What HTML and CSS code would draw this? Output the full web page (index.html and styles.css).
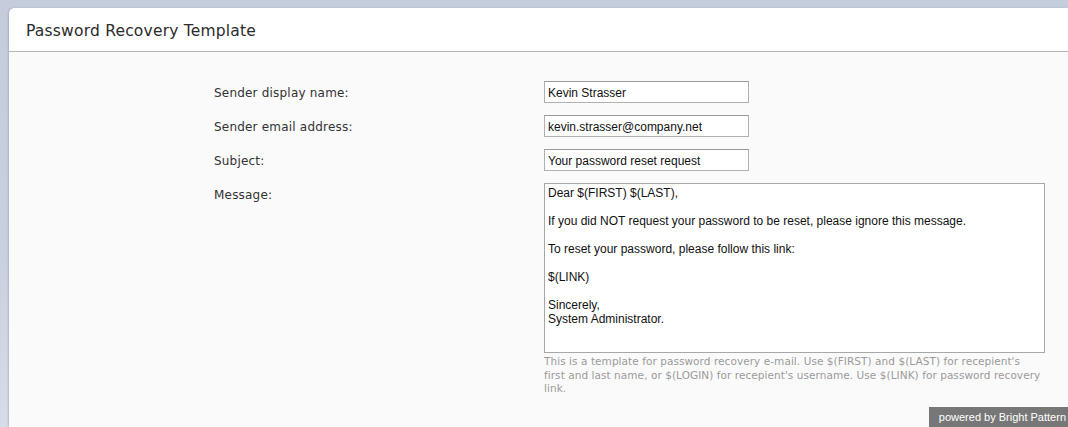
FILE: index.html
```html
<!DOCTYPE html>
<html lang="en">
<head>
  <meta charset="UTF-8">
  <title>Password Recovery Template</title>
  <link rel="stylesheet" href="styles.css">
</head>
<body>
  <div class="panel">
    <div class="panel-header">
      <h2>Password Recovery Template</h2>
    </div>

    <div class="panel-body">
      <div class="form">
        <label class="form-label">Sender display name:</label>
        <div class="form-field">
          <input type="text" class="text-input" value="Kevin Strasser">
        </div>

        <label class="form-label">Sender email address:</label>
        <div class="form-field">
          <input type="text" class="text-input" value="kevin.strasser@company.net">
        </div>

        <label class="form-label">Subject:</label>
        <div class="form-field">
          <input type="text" class="text-input" value="Your password reset request">
        </div>

        <label class="form-label">Message:</label>
        <div class="form-field">
          <textarea class="message">Dear $(FIRST) $(LAST),

If you did NOT request your password to be reset, please ignore this message.

To reset your password, please follow this link:

$(LINK)

Sincerely,
System Administrator.</textarea>
          <div class="hint">This is a template for password recovery e-mail. Use $(FIRST) and $(LAST) for recepient's first and last name, or $(LOGIN) for recepient's username. Use $(LINK) for password recovery link.</div>
        </div>
      </div>
    </div>
  </div>

  <div class="powered">powered by Bright Pattern</div>
</body>
</html>
```

FILE: styles.css
```css
html, body {
  height: 100%;
}

body {
  margin: 0;
  padding: 8px 0 0 9px;
  box-sizing: border-box;
  overflow: hidden;
  font-family: "DejaVu Sans", Verdana, sans-serif;
  background: linear-gradient(to bottom, #c5cddd 0%, #c9d1e0 60%, #d6dde8 100%);
}

.panel {
  height: 100%;
  background: #fafafa;
  border-top-left-radius: 6px;
  box-shadow: -1px 0 2px rgba(80, 90, 120, 0.25);
}

.panel-header {
  height: 44px;
  background: #ffffff;
  border-top-left-radius: 6px;
  border-bottom: 1px solid #b4b4b4;
  box-sizing: border-box;
  padding: 3px 0 0 17px;
  display: flex;
  align-items: center;
}

h2 {
  margin: 0;
  font-size: 15.5px;
  font-weight: normal;
  color: #2b2b2b;
  letter-spacing: 0.2px;
}

.panel-body {
  padding: 29px 0 0 205px;
}

.form {
  display: grid;
  grid-template-columns: 330px 1fr;
  row-gap: 12px;
}

.form-label {
  font-size: 12px;
  color: #333;
  line-height: 20px;
  padding-top: 2px;
  letter-spacing: 0.2px;
}

.text-input {
  display: block;
  width: 205px;
  height: 22px;
  box-sizing: border-box;
  margin: 0;
  padding: 1px 3px 0;
  border: 1px solid #b0b0b0;
  border-top-color: #9a9a9a;
  background: #fff;
  font-family: "Liberation Sans", Tahoma, sans-serif;
  font-size: 12px;
  color: #111;
  outline: none;
}

.message {
  display: block;
  width: 501px;
  height: 170px;
  box-sizing: border-box;
  margin: 0;
  padding: 2px 3px;
  border: 1px solid #a8a8a8;
  background: #fff;
  font-family: "Liberation Sans", Tahoma, sans-serif;
  font-size: 12px;
  line-height: 14px;
  color: #111;
  resize: none;
  outline: none;
}

.hint {
  width: 500px;
  margin-top: 2px;
  font-size: 10.5px;
  line-height: 13.5px;
  color: #9a9a9a;
  letter-spacing: 0.06px;
}

.powered {
  position: fixed;
  right: 0;
  bottom: 0;
  width: 139px;
  height: 20px;
  box-sizing: border-box;
  padding-right: 2px;
  background: #777;
  color: #fff;
  font-family: "Liberation Sans", Arial, sans-serif;
  font-size: 11px;
  line-height: 20px;
  text-align: right;
}
```
